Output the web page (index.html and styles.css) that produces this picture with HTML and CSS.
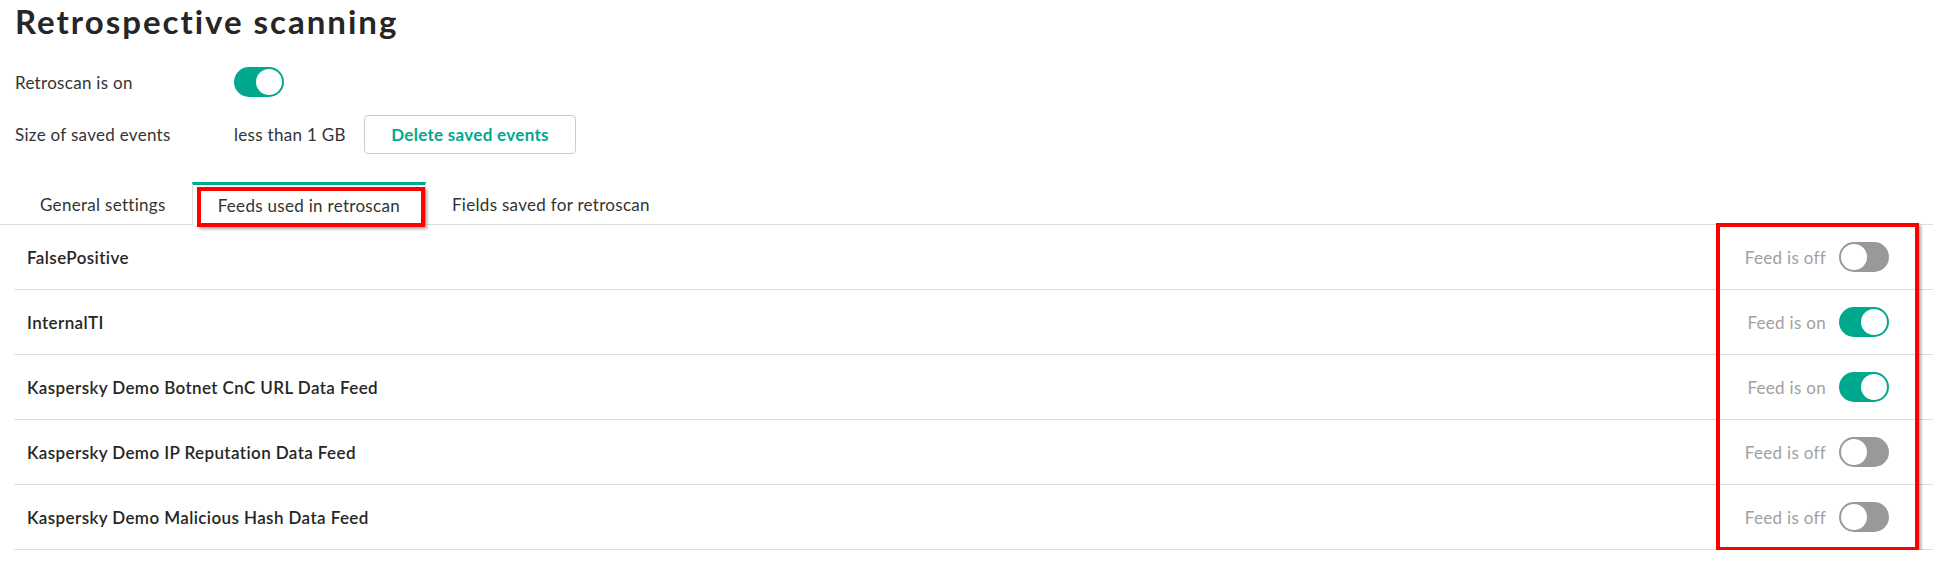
FILE: index.html
```html
<!DOCTYPE html>
<html>
<head>
<meta charset="utf-8">
<link rel="stylesheet" href="styles.css">
</head>
<body>
<div class="page">
  <h1 class="title">Retrospective scanning</h1>
  <div class="settings">
    <div class="setting-row">
      <span class="label">Retroscan is on</span>
      <span class="toggle on"><span class="knob"></span></span>
    </div>
    <div class="setting-row">
      <span class="label">Size of saved events</span>
      <span class="value">less than 1 GB</span>
      <button class="btn">Delete saved events</button>
    </div>
  </div>
  <div class="tabs">
    <div class="tab">General settings</div>
    <div class="tab active">Feeds used in retroscan<span class="annot annot-tab"></span></div>
    <div class="tab">Fields saved for retroscan</div>
  </div>
  <div class="feeds">
    <div class="feed-row">
      <span class="feed-name">FalsePositive</span>
      <span class="feed-state"><span class="state-text">Feed is off</span><span class="toggle off"><span class="knob"></span></span></span>
    </div>
    <div class="feed-row">
      <span class="feed-name">InternalTI</span>
      <span class="feed-state"><span class="state-text">Feed is on</span><span class="toggle on"><span class="knob"></span></span></span>
    </div>
    <div class="feed-row">
      <span class="feed-name">Kaspersky Demo Botnet CnC URL Data Feed</span>
      <span class="feed-state"><span class="state-text">Feed is on</span><span class="toggle on"><span class="knob"></span></span></span>
    </div>
    <div class="feed-row">
      <span class="feed-name">Kaspersky Demo IP Reputation Data Feed</span>
      <span class="feed-state"><span class="state-text">Feed is off</span><span class="toggle off"><span class="knob"></span></span></span>
    </div>
    <div class="feed-row">
      <span class="feed-name">Kaspersky Demo Malicious Hash Data Feed</span>
      <span class="feed-state"><span class="state-text">Feed is off</span><span class="toggle off"><span class="knob"></span></span></span>
    </div>
    <div class="annot annot-feeds"></div>
  </div>
</div>
</body>
</html>
```

FILE: styles.css
```css
* { box-sizing: border-box; }
html, body {
  margin: 0;
  padding: 0;
  background: #ffffff;
}
body {
  font-family: Lato, "Open Sans", "Liberation Sans", sans-serif;
  color: #262626;
  font-size: 17px;
  letter-spacing: 0.3px;
}
.page {
  width: 1933px;
  overflow: hidden;
}
.title {
  margin: 1px 0 0 15px;
  font-size: 33px;
  line-height: 40px;
  font-weight: 700;
  letter-spacing: 2px;
  color: #262626;
}
.settings {
  margin-top: 26px;
  padding-left: 15px;
  display: flex;
  flex-direction: column;
  gap: 18px;
}
.setting-row {
  display: flex;
  align-items: center;
  min-height: 30px;
}
.label {
  width: 219px;
  color: #333333;
}
.value {
  width: 130px;
  color: #333333;
}
.btn {
  font-family: inherit;
  font-size: 17px;
  letter-spacing: 0.3px;
  font-weight: 700;
  color: #00a88e;
  background: #ffffff;
  border: 1px solid #cccccc;
  border-radius: 4px;
  width: 212px;
  height: 39px;
  padding: 0;
  cursor: pointer;
}
.toggle {
  position: relative;
  display: inline-block;
  width: 50px;
  height: 30px;
  border-radius: 15px;
  flex: 0 0 auto;
}
.toggle.on { background: #00a88e; }
.toggle.off { background: #999999; }
.knob {
  position: absolute;
  top: 2px;
  width: 26px;
  height: 26px;
  border-radius: 50%;
  background: #ffffff;
}
.toggle.on .knob { right: 2px; }
.toggle.off .knob { left: 2px; }

.tabs {
  margin-top: 28px;
  display: flex;
  padding-left: 14px;
  border-bottom: 1px solid #dddddd;
  height: 43px;
}
.tab {
  position: relative;
  height: 42px;
  padding: 0 26px;
  display: flex;
  align-items: center;
  border-top: 3px solid transparent;
  color: #333333;
  white-space: nowrap;
}
.tab.active {
  border-top-color: #00a88e;
  border-left: 1px solid #dddddd;
  border-right: 1px solid #dddddd;
  padding: 0 25px;
  background: #ffffff;
  height: 43px;
}
.annot {
  position: absolute;
  border: 4px solid #ff0000;
  box-shadow: 2px 2px 3px rgba(0, 0, 0, 0.35);
  pointer-events: none;
}
.annot-tab {
  left: 4px;
  top: 2px;
  width: 228px;
  height: 40px;
}
.feeds {
  position: relative;
  margin-left: 14px;
}
.feed-row {
  height: 65px;
  border-bottom: 1px solid #dddddd;
  display: flex;
  align-items: center;
  justify-content: space-between;
  padding: 0 44px 0 13px;
}
.feed-name {
  font-weight: 600;
  letter-spacing: 0.4px;
  color: #262626;
}
.feed-state {
  display: flex;
  align-items: center;
  gap: 13px;
}
.state-text {
  color: #a0a0a0;
}
.annot-feeds {
  top: -2px;
  right: 14px;
  width: 203px;
  height: 328px;
}
```
